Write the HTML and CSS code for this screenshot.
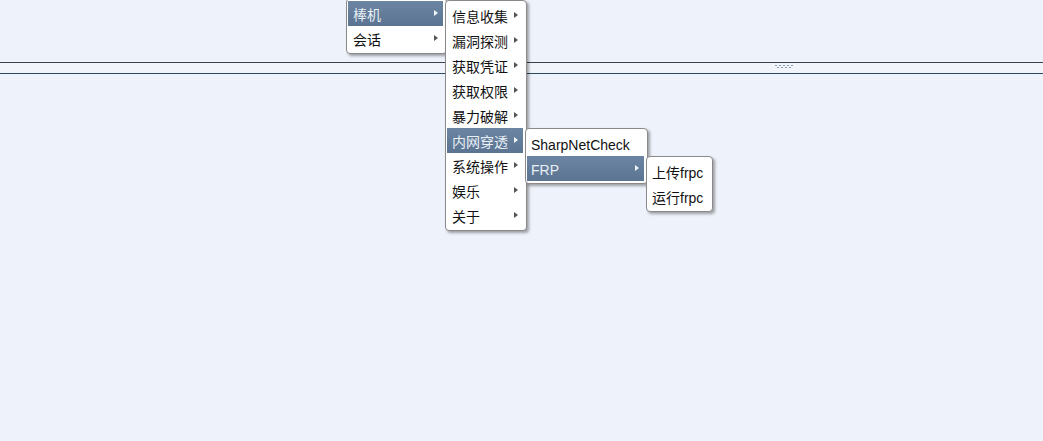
FILE: index.html
```html
<!DOCTYPE html>
<html lang="zh-CN">
<head>
  <meta charset="UTF-8" />
  <title>Menu</title>
  <link rel="stylesheet" href="styles.css">
</head>
<body>
  <div class="layout">
    <div class="pane pane-top"></div>
    <div class="splitter">
      <svg class="grip" width="26" height="5" viewBox="0 0 26 5">
        <g fill="#8c9bb0">
          <rect x="0" y="0" width="2" height="1"/><rect x="4" y="0" width="2" height="1"/>
          <rect x="8" y="0" width="2" height="1"/><rect x="12" y="0" width="2" height="1"/>
          <rect x="16" y="0" width="2" height="1"/>
          <rect x="2" y="2" width="2" height="1"/><rect x="6" y="2" width="2" height="1"/>
          <rect x="10" y="2" width="2" height="1"/><rect x="14" y="2" width="2" height="1"/>
        </g>
      </svg>
    </div>
    <div class="pane pane-bottom"></div>
  </div>

  <!-- context menu -->
  <ul class="menu menu-root">
    <li class="item has-sub active">棒机
      <ul class="menu menu-tools">
        <li class="item has-sub">信息收集</li>
        <li class="item has-sub">漏洞探测</li>
        <li class="item has-sub">获取凭证</li>
        <li class="item has-sub">获取权限</li>
        <li class="item has-sub">暴力破解</li>
        <li class="item has-sub active">内网穿透
          <ul class="menu menu-proxy">
            <li class="item">SharpNetCheck</li>
            <li class="item has-sub active">FRP
              <ul class="menu menu-frp">
                <li class="item">上传frpc</li>
                <li class="item">运行frpc</li>
              </ul>
            </li>
          </ul>
        </li>
        <li class="item has-sub">系统操作</li>
        <li class="item has-sub">娱乐</li>
        <li class="item has-sub">关于</li>
      </ul>
    </li>
    <li class="item has-sub">会话</li>
  </ul>
</body>
</html>
```

FILE: styles.css
```css
html, body {
  margin: 0;
  height: 100%;
}

body {
  font-family: "Liberation Sans", "Noto Sans CJK SC", sans-serif;
  font-size: 14px;
  color: #111;
  background: #eef2fa;
  position: relative;
  overflow: hidden;
}

.layout {
  display: flex;
  flex-direction: column;
  height: 100%;
}

.pane-top {
  height: 62px;
}

.pane-bottom {
  flex: 1;
}

.splitter {
  height: 10px;
  border-top: 1px solid #3d4149;
  border-bottom: 1px solid #2d4963;
  background: #f1f4fa;
  display: flex;
  justify-content: flex-start;
  padding-left: 775px;
  box-sizing: content-box;
}

.grip {
  margin-top: 2px;
}

/* menus */
.menu {
  list-style: none;
  margin: 0;
  padding: 2px 3px 2px 1px;
  background: #fff;
  border: 1px solid #8a8a8a;
  border-radius: 4px;
  box-shadow: 2px 2px 3px rgba(0,0,0,0.35);
  position: absolute;
}

.menu-root {
  left: 346px;
  top: -2px;
  width: 95px;
}

.menu-tools { width: 76px; }
.menu-proxy { width: 117px; }
.menu-frp   { width: 61px; }

.menu .menu {
  left: calc(100% + 2px);
  top: 0;
  z-index: 1;
  color: #111;
}

.menu-root .menu-tools {
  top: -1px;
}

.item {
  position: relative;
  height: 23px;
  padding-top: 2px;
  line-height: 24px;
  padding-left: 5px;
  white-space: nowrap;
  cursor: default;
}

.menu-proxy > .item,
.menu-frp > .item {
  padding-left: 4px;
}

.item.active {
  background: linear-gradient(#6b85a2, #5a7492);
  color: #e9eff6;
}

.has-sub::after {
  content: "";
  position: absolute;
  right: 5px;
  top: 9px;
  border-left: 4px solid #555;
  border-top: 3.5px solid transparent;
  border-bottom: 3.5px solid transparent;
}

.has-sub.active::after {
  border-left-color: #f2f5f9;
}
```
